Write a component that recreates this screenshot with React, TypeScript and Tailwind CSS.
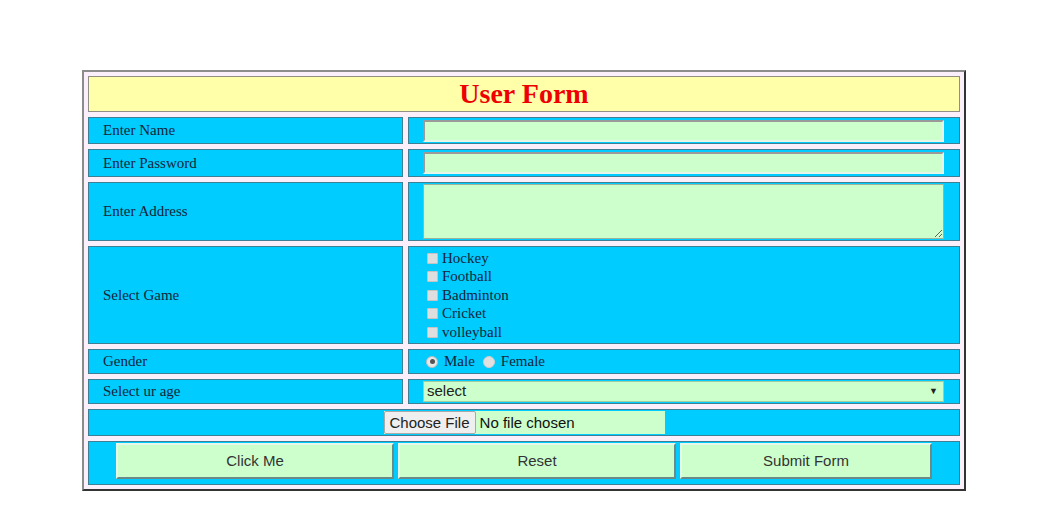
const serif = "font-['Liberation_Serif','Times_New_Roman',serif]";
const sans = "font-['Liberation_Sans',Arial,sans-serif]";

const cell = 'bg-[#00ccff] border border-[#3f7f93]';
const games = ['Hockey', 'Football', 'Badminton', 'Cricket', 'volleyball'];

function Label({ text, h }: { text: string; h: string }) {
  return (
    <div className={`${cell} ${h} flex items-center pl-[14px] text-[15px] text-[#14243a] ${serif}`}>
      {text}
    </div>
  );
}

function Box() {
  return <span className="inline-block w-[11px] h-[11px] bg-[#dedede] border border-[#c4c4c4] rounded-[1px] mr-[4px]" />;
}

export default function App() {
  return (
    <div className="w-[1063px] h-[514px] bg-white pt-[70px] pl-[82px]">
      <div className="w-[884px] border-2 border-t-[#8c8c8c] border-l-[#8c8c8c] border-r-[#333333] border-b-[#333333] bg-[#fbeffb] p-[4px] flex flex-col gap-[5px]">
        <div className="h-[36px] bg-[#ffffaa] border border-[#8f8f86] flex items-center justify-center">
          <h1 className={`${serif} text-[28px] font-bold text-[#ee0000] leading-none`}>User Form</h1>
        </div>

        <div className="grid grid-cols-[315px_552px] gap-x-[5px] gap-y-[5px]">
          <Label text="Enter Name" h="h-[27px]" />
          <div className={`${cell} h-[27px] flex items-center pl-[14px] pr-[15px]`}>
            <input className="w-full h-[22px] bg-[#ccffcc] border-2 border-t-[#9a9a9a] border-l-[#9a9a9a] border-r-[#e6f5e6] border-b-[#e6f5e6] outline-none" />
          </div>

          <Label text="Enter Password" h="h-[28px]" />
          <div className={`${cell} h-[28px] flex items-center pl-[14px] pr-[15px]`}>
            <input type="password" className="w-full h-[22px] bg-[#ccffcc] border-2 border-t-[#9a9a9a] border-l-[#9a9a9a] border-r-[#e6f5e6] border-b-[#e6f5e6] outline-none" />
          </div>

          <Label text="Enter Address" h="h-[59px]" />
          <div className={`${cell} h-[59px] flex items-center pl-[14px] pr-[15px]`}>
            <textarea className="w-full h-[55px] bg-[#ccffcc] border border-[#9ab39a] outline-none resize" />
          </div>

          <Label text="Select Game" h="h-[98px]" />
          <div className={`${cell} h-[98px] flex flex-col justify-center pl-[18px] text-[15px] leading-[18.5px] text-[#14243a] ${serif}`}>
            {games.map((g) => (
              <div key={g} className="flex items-center">
                <Box />
                {g}
              </div>
            ))}
          </div>

          <Label text="Gender" h="h-[25px]" />
          <div className={`${cell} h-[25px] flex items-center pl-[17px] text-[15px] text-[#14243a] ${serif}`}>
            <span className="w-[12px] h-[12px] rounded-full bg-[#e8e8e8] border border-[#bdbdbd] flex items-center justify-center mr-[6px]">
              <span className="w-[5px] h-[5px] rounded-full bg-[#555]" />
            </span>
            Male
            <span className="w-[12px] h-[12px] rounded-full bg-[#e0e0e0] border border-[#cfcfcf] ml-[8px] mr-[6px]" />
            Female
          </div>

          <Label text="Select ur age" h="h-[25px]" />
          <div className={`${cell} h-[25px] flex items-center pl-[14px] pr-[15px]`}>
            <div className={`w-full h-[21px] bg-[#ccffcc] border border-[#9fcfa0] flex items-center justify-between pl-[3px] pr-[5px] text-[15px] text-[#222] ${sans}`}>
              <span>select</span>
              <span className="text-[9px] text-[#222]">▼</span>
            </div>
          </div>
        </div>

        <div className={`${cell} h-[27px] flex items-center justify-center ${sans} text-[15px]`}>
          <div className="flex items-center w-[281px] h-[23px] bg-[#ccffcc]">
            <button className="h-[23px] px-[5px] bg-[#efefef] border border-[#a9a9a9] rounded-[2px] text-[#222] leading-none">Choose File</button>
            <span className="pl-[4px] text-[#111] leading-none">No file chosen</span>
          </div>
        </div>

        <div className={`${cell} h-[44px] flex items-start pt-[1px] pl-[27px] gap-[4px] ${sans} text-[15px] text-[#333]`}>
          <button className="w-[278px] h-[36px] bg-[#ccffcc] border-2 border-t-[#e8f8e8] border-l-[#e8f8e8] border-r-[#6a8a8a] border-b-[#6a8a8a]">Click Me</button>
          <button className="w-[278px] h-[36px] bg-[#ccffcc] border-2 border-t-[#e8f8e8] border-l-[#e8f8e8] border-r-[#6a8a8a] border-b-[#6a8a8a]">Reset</button>
          <button className="w-[252px] h-[36px] bg-[#ccffcc] border-2 border-t-[#e8f8e8] border-l-[#e8f8e8] border-r-[#6a8a8a] border-b-[#6a8a8a]">Submit Form</button>
        </div>
      </div>
    </div>
  );
}
